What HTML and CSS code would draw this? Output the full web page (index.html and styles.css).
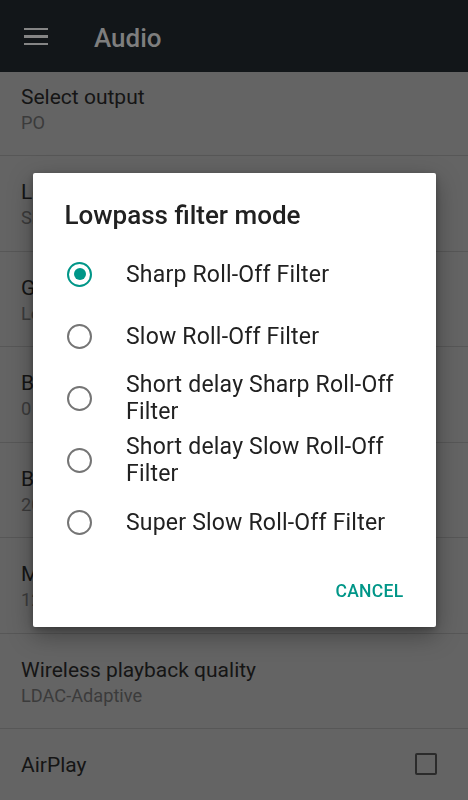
FILE: index.html
```html
<!DOCTYPE html>
<html lang="en">
<head>
<meta charset="utf-8">
<title>Audio</title>
<link rel="stylesheet" href="styles.css">
</head>
<body>
<div class="screen">
  <header class="toolbar">
    <span class="menu" aria-label="Menu"><i></i><i></i><i></i></span>
    <h1 class="toolbar-title">Audio</h1>
  </header>
  <main class="content">
    <ul class="prefs">
      <li class="pref"><span class="pref-title">Select output</span><span class="pref-summary">PO</span></li>
      <li class="pref"><span class="pref-title">Lowpass filter mode</span><span class="pref-summary">Sharp Roll-Off Filter</span></li>
      <li class="pref"><span class="pref-title">Gain</span><span class="pref-summary">Low</span></li>
      <li class="pref"><span class="pref-title">Balance</span><span class="pref-summary">0</span></li>
      <li class="pref"><span class="pref-title">Buffer time</span><span class="pref-summary">200 ms</span></li>
      <li class="pref"><span class="pref-title">Max volume</span><span class="pref-summary">120</span></li>
      <li class="pref"><span class="pref-title">Wireless playback quality</span><span class="pref-summary">LDAC-Adaptive</span></li>
      <li class="pref pref-check"><span class="pref-title">AirPlay</span><span class="checkbox"></span></li>
    </ul>
  </main>
  <div class="scrim">
    <div class="dialog" role="dialog">
      <h2 class="dialog-title">Lowpass filter mode</h2>
      <ul class="options">
        <li class="option selected"><span class="radio"></span><span class="option-label">Sharp Roll-Off Filter</span></li>
        <li class="option"><span class="radio"></span><span class="option-label">Slow Roll-Off Filter</span></li>
        <li class="option"><span class="radio"></span><span class="option-label">Short delay Sharp Roll-Off Filter</span></li>
        <li class="option"><span class="radio"></span><span class="option-label">Short delay Slow Roll-Off Filter</span></li>
        <li class="option"><span class="radio"></span><span class="option-label">Super Slow Roll-Off Filter</span></li>
      </ul>
      <div class="actions"><button class="btn-text">CANCEL</button></div>
    </div>
  </div>
</div>
</body>
</html>
```

FILE: styles.css
```css
* { box-sizing: border-box; }
html, body { margin: 0; padding: 0; }
body {
  font-family: Roboto, "Noto Sans", "Liberation Sans", sans-serif;
  background: #646464;
  width: 468px;
  height: 800px;
  overflow: hidden;
}
.screen {
  width: 468px;
  height: 800px;
  display: flex;
  flex-direction: column;
  overflow: hidden;
}
.toolbar {
  height: 72px;
  flex: none;
  background: #121619;
  display: flex;
  align-items: center;
  padding-left: 24px;
  position: relative;
  z-index: 1;
}
.menu {
  width: 24px;
  display: flex;
  flex-direction: column;
  gap: 4.8px;
  margin-top: 1px;
}
.menu i {
  display: block;
  height: 2.6px;
  background: #858585;
}
.toolbar-title {
  margin: 4px 0 0 46px;
  font-size: 26px;
  font-weight: 500;
  color: #7e7e7e;
  line-height: 32px;
}
.content {
  flex: 1;
  overflow: hidden;
  background: #646464;
}
.prefs {
  list-style: none;
  margin: -11.5px 0 0;
  padding: 0;
}
.pref {
  display: flex;
  flex-direction: column;
  height: 95.5px;
  padding: 23px 21px 0;
  border-bottom: 1px solid #575757;
}
.pref-title {
  font-size: 21px;
  line-height: 26px;
  color: #151515;
}
.pref-summary {
  font-size: 18.2px;
  line-height: 26px;
  color: #3b3b3b;
}
.pref-check {
  flex-direction: row;
  align-items: flex-start;
  justify-content: space-between;
  padding: 23px 31px 0 21px;
  border-bottom: none;
}
.checkbox {
  width: 22px;
  height: 22px;
  margin-top: 1px;
  border: 2.6px solid #2b2b2b;
  border-radius: 2px;
}
.scrim {
  position: fixed;
  inset: 0;
  display: flex;
  align-items: center;
  justify-content: center;
  z-index: 2;
}
.dialog {
  width: 403px;
  background: #ffffff;
  border-radius: 2px;
  box-shadow: 0 8px 24px rgba(0, 0, 0, 0.35), 0 2px 6px rgba(0, 0, 0, 0.25);
  padding-top: 26px;
}
.dialog-title {
  margin: 0 0 12.5px;
  padding: 0 32px 0 32px;
  font-size: 26px;
  font-weight: 500;
  line-height: 32px;
  color: #212121;
}
.options {
  list-style: none;
  margin: 0;
  padding: 0;
}
.option {
  display: flex;
  align-items: center;
  min-height: 62px;
  padding: 0 24px 0 34.5px;
}
.radio {
  flex: none;
  width: 25px;
  height: 25px;
  border-radius: 50%;
  border: 2.6px solid #757575;
  display: flex;
  align-items: center;
  justify-content: center;
  margin-right: 34px;
}
.option.selected .radio {
  border-color: #009688;
}
.option.selected .radio::after {
  content: "";
  width: 12px;
  height: 12px;
  border-radius: 50%;
  background: #009688;
}
.option-label {
  font-size: 23px;
  line-height: 27px;
  letter-spacing: 0.2px;
  color: #212121;
}
.actions {
  display: flex;
  justify-content: flex-end;
  padding: 20px 24px 18px;
}
.btn-text {
  border: none;
  background: none;
  height: 36px;
  padding: 0 8px;
  font-family: inherit;
  font-size: 17.5px;
  font-weight: 500;
  letter-spacing: 0.3px;
  color: #009688;
}
```
